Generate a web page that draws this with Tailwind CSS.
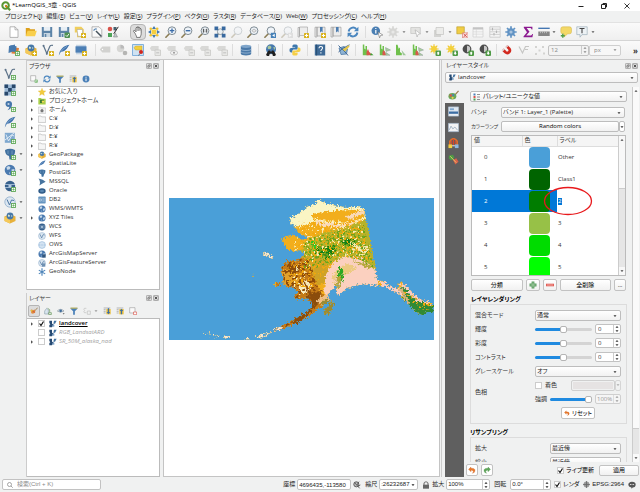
<!DOCTYPE html>
<html lang="ja">
<head>
    <meta charset="UTF-8">
    <meta name="viewport" content="width=device-width, initial-scale=1.0">
    <title>*LearnQGIS_3章 - QGIS</title>
    <script src="https://cdn.jsdelivr.net/npm/@tailwindcss/browser@4"></script>
</head>
<body class="h-screen flex flex-col overflow-hidden bg-[#f0f1f1] text-[#333] text-[6px] leading-[9px] whitespace-nowrap font-['Open_Sans','Noto_Sans_CJK_JP',sans-serif] [font-feature-settings:'palt']">

    <!-- Icon sheet, every icon is drawn on a 12x12 grid -->
    <svg class="hidden" xmlns="http://www.w3.org/2000/svg">
        <symbol id="plus-yellow" viewBox="0 0 12 12"><rect x="7" y="7" width="5" height="5" rx=".6" fill="#d9b21c"/><path d="M9.500 7.800v3.400M7.800 9.500h3.400" stroke="#fff" stroke-width="1"/></symbol>
        <symbol id="plus-green" viewBox="0 0 12 12"><rect x="7.500" y="7.500" width="4" height="4" fill="#f4fbf3" stroke="#5ea757" stroke-width=".9"/><path d="M9.500 8.300v2.400M8.300 9.500h2.400" stroke="#5ea757" stroke-width=".7"/></symbol>
        <symbol id="new" viewBox="0 0 12 12"><path d="M2 .8h5l3 3v7.600H2z" fill="#fff" stroke="#9a9a9a" stroke-width=".7"/><path d="M7 .8v3h3" fill="none" stroke="#9a9a9a" stroke-width=".7"/></symbol>
        <symbol id="open" viewBox="0 0 12 12"><path d="M.8 2h3.500l1 1.300H10V10H.8z" fill="#dda01c"/><path d="M2.500 4.800h9.300L10 10.300H.8z" fill="#f9cf4c"/></symbol>
        <symbol id="save" viewBox="0 0 12 12"><path d="M.8 1h10.400v10H.8z" fill="#5c84a8"/><path d="M2.800 1h6.400v3.800H2.800z" fill="#e8eff5"/><path d="M2.800 7h6.400v4H2.800z" fill="#c7d6e2"/><path d="M3.800 8h1.500v3H3.800z" fill="#5c84a8"/></symbol>
        <symbol id="saveas" viewBox="0 0 12 12"><use href="#save"/><rect x="6.500" y="6.500" width="5.500" height="5.500" rx="1" fill="#4f9152"/><path d="m7.800 9.300 1.200 1.200 2-2.600" fill="none" stroke="#fff" stroke-width=".9"/></symbol>
        <symbol id="newlayout" viewBox="0 0 12 12"><path d="M.8.800h6.500l2.500 2.500v8H3V6.500H.8z" fill="#f0ce5c"/><path d="M3 3.500h5.500v6.800H4z" fill="#fff" stroke="#9a9a9a" stroke-width=".5"/><use href="#plus-yellow"/></symbol>
        <symbol id="layoutmgr" viewBox="0 0 12 12"><path d="M1 .8h7l2.800 2.800v7.600H1z" fill="#fafafa" stroke="#9a9a9a" stroke-width=".7"/><path d="m5 5 5.500 5.500" stroke="#46535d" stroke-width="1.500"/><path d="M2.800 4.800a2 2 0 0 1 3-1.600" fill="none" stroke="#5d8ab5" stroke-width="1.200"/></symbol>
        <symbol id="style" viewBox="0 0 12 12"><circle cx="3" cy="3" r="2.300" fill="#d9534a"/><path d="M6.500 1h3v3.400h-3z" fill="#45616f"/><path d="M1 7h4v4H1z" fill="#4ba357"/><path d="m11.300.8-4.600 7" stroke="#2e2e2e" stroke-width="1"/><path d="m6.500 11 1.700-4.500L10.500 11z" fill="#bfc5ca" stroke="#777" stroke-width=".5"/></symbol>
        <symbol id="hand" viewBox="0 0 12 12"><path d="M3.200 7.500 1.600 5.400c-.4-1 .7-1.400 1.300-.7L4 5.800V2.200c0-1 1.300-1 1.300 0V1.400c0-1 1.300-1 1.300 0v.8c0-.9 1.300-.9 1.300 0v1c0-.8 1.300-.8 1.300 0V7.400c0 2-.8 2.500-1 4H4.600c0-1.800-.9-2.300-1.400-3.900z" fill="#fff" stroke="#444" stroke-width=".7"/><path d="M5.300 2.500V5M6.600 2.500V5M7.900 3v2" stroke="#444" stroke-width=".5"/></symbol>
        <symbol id="pan" viewBox="0 0 12 12"><path d="M3.500 3.500h5v5h-5z" fill="#f4ce3e"/><path d="m6 0 2 3H4zM6 12 4 9h4zM0 6l3-2v4zM12 6 9 8V4z" fill="#4479b0"/><circle cx="2.800" cy="2.800" r="1.300" fill="#edc32f"/><circle cx="9.200" cy="2.800" r="1.300" fill="#edc32f"/><circle cx="2.800" cy="9.200" r="1.300" fill="#edc32f"/><circle cx="9.200" cy="9.200" r="1.300" fill="#edc32f"/></symbol>
        <symbol id="lens" viewBox="0 0 12 12"><path d="M4.300 7.800.9 11.200" stroke="#8b7d55" stroke-width="1.600" stroke-linecap="round"/><circle cx="7" cy="4.700" r="3.900" fill="#eef3f8" stroke="#65737d" stroke-width=".8"/></symbol>
        <symbol id="zoomin" viewBox="0 0 12 12"><use href="#lens"/><path d="M7 2.400v4.600M4.700 4.700h4.600" stroke="#3b6ca8" stroke-width="1.300"/></symbol>
        <symbol id="zoomout" viewBox="0 0 12 12"><use href="#lens"/><path d="M4.700 4.700h4.600" stroke="#3b6ca8" stroke-width="1.400"/></symbol>
        <symbol id="zoomone" viewBox="0 0 12 12"><use href="#lens"/><path d="M5.400 2.800v3.800M8.700 2.800v3.800" stroke="#333" stroke-width=".9"/><path d="M7 3.600v.8M7 5.400v.8" stroke="#333" stroke-width=".8"/></symbol>
        <symbol id="zoomfull" viewBox="0 0 12 12"><path d="M4.500 7.500 2 10.500" stroke="#8b7d55" stroke-width="1.300"/><circle cx="6.300" cy="5.700" r="2.900" fill="#e9eff3" stroke="#717c84" stroke-width=".7"/><path d="M.5.500h3.700v3.700H.5zM7.800.500h3.700v3.700H7.800zM.5 7.800h3.700v3.700H.5zM7.800 7.800h3.700v3.700H7.800z" fill="#38699f"/></symbol>
        <symbol id="zoomsel" viewBox="0 0 12 12"><g opacity=".35"><use href="#lens"/></g></symbol>
        <symbol id="zoomlayer" viewBox="0 0 12 12"><use href="#lens"/><path d="m4.800 4.700 2.200-1.700 2.300 1.700L7 6.400z" fill="#e8e8e8" stroke="#888" stroke-width=".5"/></symbol>
        <symbol id="zoomlast" viewBox="0 0 12 12"><use href="#lens"/><path d="M6.800 6.800H12V12H6.800z" fill="#4681b8"/><path d="m10.700 7.700-2.500 1.700 2.500 1.700z" fill="#fff"/></symbol>
        <symbol id="zoomnext" viewBox="0 0 12 12"><g opacity=".35"><use href="#lens"/><path d="M6.800 6.800H12V12H6.800z" fill="#bbb"/><path d="m8.200 7.700 2.500 1.700-2.500 1.700z" fill="#fff"/></g></symbol>
        <symbol id="mapnew" viewBox="0 0 12 12"><path d="M1 1.500h1.500V11H1zM2.500 1h8v8.500h-8z" fill="#ececec" stroke="#9c9c9c" stroke-width=".6"/><use href="#plus-yellow"/></symbol>
        <symbol id="bookmark" viewBox="0 0 12 12"><path d="M1 1.200h2V11H1zM3 1.200h8V10H3z" fill="#ececec" stroke="#949494" stroke-width=".6"/><path d="M6 1h2.600v5.500L7.300 5.300 6 6.500z" fill="#4d7db0"/></symbol>
        <symbol id="bookmarknew" viewBox="0 0 12 12"><use href="#bookmark"/><use href="#plus-yellow"/></symbol>
        <symbol id="refresh" viewBox="0 0 12 12"><path d="M1.600 5.500A4.500 4.500 0 0 1 9.300 3M10.400 6.500A4.500 4.500 0 0 1 2.700 9" fill="none" stroke="#4a86bf" stroke-width="1.900"/><path d="M11.400.7v4.500H6.900zM.6 11.300V6.800h4.500z" fill="#4a86bf"/></symbol>
        <symbol id="identify" viewBox="0 0 12 12"><circle cx="4.800" cy="4.800" r="4.300" fill="#4b7fb3"/><path d="M4.800 4v3.600M4.800 1.900v1.200" stroke="#fff" stroke-width="1.200"/><path d="m6.800 5.800 5 3.200-2.300.5-.9 2.300z" fill="#fff" stroke="#555" stroke-width=".5"/></symbol>
        <symbol id="gear" viewBox="0 0 12 12"><path d="M6 .3v11.400M.3 6h11.400M2 2l8 8M10 2l-8 8" stroke="currentColor" stroke-width="1.700"/><circle cx="6" cy="6" r="3.800" fill="currentColor"/><circle cx="6" cy="6" r="1.600" fill="#fff" fill-opacity=".45"/></symbol>
        <symbol id="select" viewBox="0 0 12 12"><path d="M.8 1.500h9.500v6H.8z" fill="#e3e3e1" stroke="#c3c3c1" stroke-width=".7"/><path d="m5 3.800 5.500 4-2.500.6-.9 2.600z" fill="#fff" stroke="#aaa" stroke-width=".6"/></symbol>
        <symbol id="layersgray" viewBox="0 0 12 12"><path d="M1 4h7v7H1z" fill="#d4d4d2"/><path d="M3 1.500h7.500v7H3z" fill="#ececea" stroke="#bcbcba" stroke-width=".6"/></symbol>
        <symbol id="deselect" viewBox="0 0 12 12"><path d="M.8.800h7.500v7H.8z" fill="#f0cd45" stroke="#b99a22" stroke-width=".6"/><path d="M6.500 6.800H12V12H6.500z" fill="#fbe5e3" stroke="#d9706a" stroke-width=".6"/><path d="m7.500 7.800 3.400 3.200m0-3.200-3.400 3.200" stroke="#cc3f3a" stroke-width=".9"/></symbol>
        <symbol id="table" viewBox="0 0 12 12"><path d="M1 1.500h10v9.500H1z" fill="#f6f6f6" stroke="#cfcfcf" stroke-width=".7"/><path d="M1 2.500h10" stroke="#c4c4c4" stroke-width="2"/><path d="M1 5.800h10M1 8.200h10M4.300 3v8" stroke="#d4d4d4" stroke-width=".6"/></symbol>
        <symbol id="calc" viewBox="0 0 12 12"><path d="M.8.800h10.400v10.400H.8z" fill="#f4f4f4" stroke="#c2c2c2" stroke-width=".7"/><path d="M1 3.200h10M1 5.800h10M1 8.400h10" stroke="#d0d0d0"/><path d="M3.500 1.800v2.600M7.500 4.500v2.600M5 7v2.600" stroke="#b5b5b5" stroke-width="1.100"/></symbol>
        <symbol id="sigma" viewBox="0 0 12 12"><path d="M1.800.8h8.600v2.700h-.8C9.300 2.400 8.800 2 7.700 2H4.600L7.500 5.700 4.200 9.600h3.900c1.200 0 1.700-.5 2.100-1.700h.8l-.6 3.300H1.500v-.7L5 6.300 1.800 1.800z" fill="#8c1a90"/></symbol>
        <symbol id="measure" viewBox="0 0 12 12"><path d="M.3 2.300h11.400" stroke="#3a6fae" stroke-width="1.300"/><path d="M.3 5.500h11.400v4.500H.3z" fill="#858585"/><path d="M2.500 5.500v1.700M4.500 5.500v1.700M6.500 5.500v1.700M8.500 5.500v1.700" stroke="#d8d8d8" stroke-width=".6"/></symbol>
        <symbol id="tip" viewBox="0 0 12 12"><path d="M2.800.8h6.700q2 0 2 2v3q0 2-2 2H7.800L4 11V7.800H2.800q-2 0-2-2v-3q0-2 2-2z" fill="#f3d867" stroke="#d2b244" stroke-width=".5"/><path d="M2.800 7.800v4M.8 9.800h4" stroke="#4f9c47" stroke-width="1.400"/></symbol>
        <symbol id="annot" viewBox="0 0 12 12"><path d="M.8.800h10.400v7.800H6l-2 2.600V8.600H.8z" fill="#edf2f5" stroke="#9db0bb" stroke-width=".7"/><path d="M3.500 2.500h5M6 2.500v4.700" stroke="#444" stroke-width="1.100"/></symbol>

        <symbol id="dsm" viewBox="0 0 12 12"><path d="m1 2 6-1.500V7L.5 9z" fill="#4c7cae"/><path d="m4 3.200 7 .8-1 6-6.500-.5z" fill="#e0803a"/><path d="m2.500 1.300 6 1L8 8 2 7.500z" fill="#4678ad"/><use href="#plus-green"/></symbol>
        <symbol id="gpkg" viewBox="0 0 12 12"><path d="m6 2 5.500 2.500V9L6 11.500.500 9V4.500z" fill="#e7b13b"/><path d="M6 6.700v4.800L.5 9V4.500z" fill="#f4c95a"/><circle cx="6" cy="4" r="3.400" fill="#4778a8"/><path d="m4 2.500 2 .8-.6 1.700L4 4.500zM7 3l1.500 1-1 1z" fill="#dbe8d2"/></symbol>
        <symbol id="gpkgnew" viewBox="0 0 12 12"><use href="#gpkg"/><use href="#plus-yellow"/></symbol>
        <symbol id="vee" viewBox="0 0 12 12"><path d="M1.500 1.800 4.800 9.500 8 2Q8.700.9 11 1.400" fill="none" stroke="#5d7389" stroke-width="1.200"/><circle cx="1.500" cy="1.800" r="1" fill="#5d7389"/><circle cx="4.800" cy="9.700" r="1" fill="#5d7389"/></symbol>
        <symbol id="veenew" viewBox="0 0 12 12"><use href="#vee"/><use href="#plus-yellow"/></symbol>
        <symbol id="veeadd" viewBox="0 0 12 12"><use href="#vee"/><use href="#plus-green"/></symbol>
        <symbol id="feather" viewBox="0 0 12 12"><path d="M.8 11.400C1.500 6 5 1.500 11.500.700 9.500 3 10 4 7.500 6c-1.800 1.500-4 1.500-5 2.400z" fill="#3f72ac"/><path d="M1.500 9.500Q4.500 4.500 9 2.300" stroke="#b9cfe4" stroke-width=".5" fill="none"/></symbol>
        <symbol id="feathernew" viewBox="0 0 12 12"><use href="#feather"/><use href="#plus-yellow"/></symbol>
        <symbol id="featheradd" viewBox="0 0 12 12"><use href="#feather"/><use href="#plus-green"/></symbol>
        <symbol id="chipnew" viewBox="0 0 12 12"><path d="M2 .8v9.500M4 .8v9.500M6 .8v9.500M8 .8v9.500M10 .8v9.500" stroke="#7ba2c9" stroke-width=".8"/><path d="M.5 2.300h11v6.300H.5z" fill="#4c7fb5"/><use href="#plus-yellow"/></symbol>
        <symbol id="labelgray" viewBox="0 0 12 12"><path d="m.8 5.500 2.500-3h8v6h-8z" fill="#d2d2d0"/><circle cx="3.500" cy="5.500" r=".7" fill="#fff"/></symbol>
        <symbol id="labelgray2" viewBox="0 0 12 12"><path d="M.8 4.300 2.600 2h7v5H2.600z" fill="#d8d8d6"/><path d="M6 6h5.500v5.500H6z" fill="#e8e8e6" stroke="#c4c4c2" stroke-width=".7"/><path d="M7.200 8.800h3" stroke="#b5b5b5" stroke-width=".8"/></symbol>
        <symbol id="labeleye" viewBox="0 0 12 12"><path d="M.8 4.300 2.600 2h7v5H2.600z" fill="#d8d8d6"/><ellipse cx="8" cy="8.800" rx="3.600" ry="2.200" fill="#f2f2f2" stroke="#b5b5b5" stroke-width=".7"/><circle cx="8" cy="8.800" r="1" fill="#999"/></symbol>
        <symbol id="pie" viewBox="0 0 12 12"><circle cx="4.500" cy="4.500" r="3.700" fill="#d6d6d4"/><path d="M4.500 4.500V.800A3.700 3.700 0 0 1 8.200 4.500z" fill="#bababa"/><circle cx="9" cy="9" r="2.300" fill="#b5b5b3"/></symbol>
        <symbol id="pin" viewBox="0 0 12 12"><path d="M.5.500h11v11H.5z" fill="#cfe2f2" stroke="#6aa2d6" stroke-width=".8"/><path d="M2 3.800 3.500 2H10v4H3.500z" fill="#f3cf3c" stroke="#b69a28" stroke-width=".4"/><circle cx="9" cy="8" r="2" fill="#d3261d"/><path d="m8 9.500-1.500 2" stroke="#555" stroke-width=".8"/></symbol>
        <symbol id="db" viewBox="0 0 12 12"><path d="M.8 2.300v7.500c0 2.300 10.400 2.300 10.400 0V2.300z" fill="#4a79a8"/><path d="M.8 5c0 2 10.400 2 10.400 0M.8 7.600c0 2 10.400 2 10.400 0" fill="none" stroke="#a8c3dc" stroke-width=".7"/><ellipse cx="6" cy="2.300" rx="5.200" ry="1.600" fill="#7fa5ca"/></symbol>
        <symbol id="globe" viewBox="0 0 12 12"><circle cx="6" cy="6" r="5.300" fill="#4a7ab0"/><path d="m2.500 3 2.500-1 1.500 1.500-1 2L3 5.800zM7.500 5.500l3-.5-.5 3-2 1.500zM5 8l1.200 1-.6 1.500z" fill="#c9dae9"/></symbol>
        <symbol id="globefind" viewBox="0 0 12 12"><circle cx="6" cy="5.200" r="5" fill="#4678ad"/><path d="m2.500 2.500 2.500-1 1.500 1.500-1 2L3 5zM8 3.500l2-.5v3z" fill="#a9c79b"/><path d="M3.500 6.500h1.700v1h1.600v-1h1.700l2 3.200a1.600 1.600 0 1 1-3 .8L7 9.500H5l-.5 1a1.600 1.600 0 1 1-3-.8z" fill="#1f1f1f"/></symbol>
        <symbol id="python" viewBox="0 0 12 12"><path d="M6 .5c-2 0-2.600.6-2.600 1.600v1.300H6.200v.6H2.300C1 4 .5 4.800.5 6.200S1 8.400 2.300 8.400h1V7.200c0-1.100.8-1.600 1.700-1.600h2.400c.8 0 1.300-.6 1.300-1.400V2.100C8.700 1.100 8 .500 6 .5z" fill="#3e78ad"/><path d="M6 11.500c2 0 2.600-.6 2.600-1.600V8.600H5.800V8h3.900c1.300 0 1.800-.8 1.800-2.200s-.5-2.200-1.800-2.200h-1v1.200c0 1.100-.8 1.600-1.700 1.600H4.600c-.8 0-1.300.6-1.300 1.400v2.100c0 1 .7 1.600 2.700 1.600z" fill="#f5cf47"/></symbol>
        <symbol id="help" viewBox="0 0 12 12"><path d="M.8.500h10.400v11H.8z" fill="#3e6a96"/><path d="M2.600.500v11" stroke="#25476a" stroke-width=".8"/><path d="M5 4.200q0-1.700 1.800-1.700t1.700 1.600c0 1.300-1.600 1.300-1.600 2.900M6.900 8.300v1.200" fill="none" stroke="#fff" stroke-width="1.100"/></symbol>
        <symbol id="topo" viewBox="0 0 12 12"><path d="M1 4 6 2.500 9.500 5 8.500 10 3 10.500z" fill="#8eb3d4" stroke="#3f6f9f" stroke-width=".7"/><path d="m.5 1.500 3 3 5 5 1.500 2M.5 8l4-3.500L11.500.800" stroke="#355f8c" stroke-width=".9" fill="none"/><path d="m4.500 5.500 6.500-4.500.5 1.500L7 7.500z" fill="#e5c548"/></symbol>
        <symbol id="hist" viewBox="0 0 12 12"><path d="M.8 11.300V.5h1.500v4l1.200 1V2h1.500v5l1.500 1.500V11.300z" fill="#6fc04c"/><path d="M4.500 11.300V8l1.500-3 1.200 3 1.300 1 1 2.300z" fill="#d8584c"/><path d="m9 9 2.500 2.300H8z" fill="#3da033"/></symbol>
        <symbol id="histfull" viewBox="0 0 12 12"><path d="M.8 11.300V.5h1.500v4l1.200 1V2h1.500v5l1.500 1.500V11.300z" fill="#6fc04c"/><path d="M3.500 11.300V8l1.300-2L6 8l1 3.300z" fill="#d8584c"/><path d="m6.500 3.500 5 2.500-4.500 1.500zM7 11.300V8.500l4 2.800z" stroke="#8c9a94" stroke-width=".5" fill="#a7cf9b"/></symbol>
        <symbol id="histgreen" viewBox="0 0 12 12"><path d="M1 11.300V.800h1.600l1 4L5 3.500V8l1.800 1.200v2.100z" fill="#6fc04c"/><path d="m6.500 6 4.500 5.300H8z" fill="#9fc79a"/></symbol>
        <symbol id="sun" viewBox="0 0 12 12"><path d="M5 .3v9.200M.3 5h9.300M1.700 1.700l6.600 6.600M8.300 1.700 1.700 8.300" stroke="#efc62b" stroke-width="1.100"/><circle cx="5" cy="5" r="2.900" fill="#f4d13a"/></symbol>
        <symbol id="sunup" viewBox="0 0 12 12"><use href="#sun"/><rect x="6.500" y="6.500" width="5.500" height="5.500" rx="1" fill="#4f9a45"/><path d="m9.200 7.500 1.600 1.800H10v1.500H8.400V9.300h-.8z" fill="#fff"/></symbol>
        <symbol id="sundown" viewBox="0 0 12 12"><use href="#sun"/><rect x="6.500" y="6.500" width="5.500" height="5.500" rx="1" fill="#4f9a45"/><path d="M9.200 11 7.600 9.200h.8V7.600H10v1.600h.8z" fill="#fff"/></symbol>
        <symbol id="conup" viewBox="0 0 12 12"><circle cx="5" cy="5" r="4.400" fill="#4d4d4d"/><path d="M5 1.800a3.200 3.200 0 0 1 0 6.400z" fill="#c8c8c8"/><rect x="6.500" y="6.500" width="5.500" height="5.500" rx="1" fill="#4f9a45"/><path d="m9.200 7.500 1.600 1.800H10v1.500H8.400V9.300h-.8z" fill="#fff"/></symbol>
        <symbol id="condown" viewBox="0 0 12 12"><circle cx="5" cy="5" r="4.400" fill="#4d4d4d"/><path d="M5 1.800a3.200 3.200 0 0 1 0 6.400z" fill="#c8c8c8"/><rect x="6.500" y="6.500" width="5.500" height="5.500" rx="1" fill="#4f9a45"/><path d="M9.200 11 7.600 9.200h.8V7.600H10v1.600h.8z" fill="#fff"/></symbol>
        <symbol id="magnet" viewBox="0 0 12 12"><path d="M1.800 5.500 4.500 8.300Q6.300 9.800 8 8.200T8.200 4.600L5.500 2" fill="none" stroke="#d22a20" stroke-width="2.700"/><path d="m.7 6.600 2.200-2.100.9.900-2.200 2.200zM4.500 3.100 6.700.9l.9.900-2.200 2.200z" fill="#dedede"/></symbol>
        <symbol id="snapgray" viewBox="0 0 12 12"><path d="M1 2.500 4.500 9 7.500 2.500H11M7 5.500h3" fill="none" stroke="#c6c6c4" stroke-width="1.200"/></symbol>
        <symbol id="dotsgray" viewBox="0 0 12 12"><path d="M1 2h2v2H1zM8 2h2v2H8zM4.500 5.500h2v2h-2zM1 9h2v2H1zM9 8.500h2v2H9z" fill="#d3d3d1"/></symbol>

        <symbol id="raster" viewBox="0 0 12 12"><path d="M.5.500h11v11H.5z" fill="#9bb9d6"/><path d="M.5.500h3.600v3.600H.5zM7.800.500h3.700v3.600H7.800zM4.100 4.100h3.700v3.700H4.100zM.5 7.800h3.600v3.700H.5z" fill="#29486b"/></symbol>
        <symbol id="rasteradd" viewBox="0 0 12 12"><use href="#raster"/><use href="#plus-green"/></symbol>
        <symbol id="rasterlay" viewBox="0 0 12 12"><path d="M.5 1h4v4.500l2.500 1L4.500 11h-4V7.500l1.500-1-1.500-2z" fill="#264a72"/><path d="M7.500 1h4L9 5.500H6.500z" fill="#41719f"/><path d="M5 7h3v3H5z" fill="#7fa2c6"/></symbol>
        <symbol id="comma" viewBox="0 0 12 12"><path d="M4.500 1A3 3 0 0 1 8 4.500C8 7.500 6 9.500 3.500 10.200 4.800 9 5.300 8 5.300 6.800 3 7.300 1.500 5.800 1.500 4a3 3 0 0 1 3-3z" fill="#4576ab"/><circle cx="4.500" cy="4" r="1.100" fill="#c5d6e7"/><use href="#plus-green"/></symbol>
        <symbol id="mesh" viewBox="0 0 12 12"><path d="M.8.800h10v10H.8z" fill="#7fa8cf"/><path d="M2 2.500 4.500 9 8 3l2 1M1 8l9-7" stroke="#e6eff7" stroke-width=".9" fill="none"/><use href="#plus-green"/></symbol>
        <symbol id="elephant" viewBox="0 0 12 12"><path d="M1 2q5-2.500 10 0 .6 4-2 6.300L8 11.500H5.500L5 8Q1 7 1 2z" fill="#41719f"/><path d="M4 2.500v3.500M8 2.500v4" stroke="#84a9cc" stroke-width=".7"/></symbol>
        <symbol id="pgadd" viewBox="0 0 12 12"><use href="#elephant"/><use href="#plus-green"/></symbol>
        <symbol id="globeadd" viewBox="0 0 12 12"><use href="#globe"/><use href="#plus-green"/></symbol>
        <symbol id="wcs" viewBox="0 0 12 12"><circle cx="6" cy="6" r="5.200" fill="#38618d"/><path d="M1 4.500h10M1 7.500h10" stroke="#b7cde2" stroke-width=".8"/><path d="M4.500 5h3v2.200h-3z" fill="#b7cde2"/></symbol>
        <symbol id="wcsadd" viewBox="0 0 12 12"><use href="#wcs"/><use href="#plus-green"/></symbol>
        <symbol id="wfs" viewBox="0 0 12 12"><circle cx="6" cy="6" r="5.200" fill="#dce7f1" stroke="#85a6c6" stroke-width=".7"/><path d="M3 3.500 5.500 9 7.500 4l2.500.5" fill="none" stroke="#4d77a2" stroke-width="1"/></symbol>
        <symbol id="wfsadd" viewBox="0 0 12 12"><use href="#wfs"/><use href="#plus-green"/></symbol>
        <symbol id="ows" viewBox="0 0 12 12"><circle cx="6" cy="6" r="5.200" fill="#eaf2f9" stroke="#8db3d8" stroke-width=".8"/><path d="M1 6h10M6 1v10M3.500 1.800q-2 4 0 8.500M8.500 1.800q2 4 0 8.500" fill="none" stroke="#8db3d8" stroke-width=".7"/></symbol>
        <symbol id="arcmap" viewBox="0 0 12 12"><use href="#globe"/><path d="M6.500 6.500h5v5h-5z" fill="#33577e"/></symbol>
        <symbol id="arcfeat" viewBox="0 0 12 12"><use href="#wfs"/><path d="M6 6.500h5v5H6z" fill="#6f91b3"/></symbol>
        <symbol id="star" viewBox="0 0 12 12"><path d="m6 .3 1.600 3.900 4.200.3-3.200 2.700 1 4.100L6 9.100l-3.600 2.200 1-4.100L.2 4.500l4.200-.3z" fill="#f2cb3c" stroke="#dcb02b" stroke-width=".4"/></symbol>
        <symbol id="projhome" viewBox="0 0 12 12"><path d="M.5 1.500h4l1 1.300h6v8.400H.5z" fill="#a8cf4b"/><path d="M3 4h6v5H3z" fill="#3e7f33"/><circle cx="7.500" cy="7" r="1.800" fill="#f4de58"/></symbol>
        <symbol id="home" viewBox="0 0 12 12"><path d="M.5 1.500h4l1 1.300h6v8.400H.5z" fill="#f2f2f2" stroke="#a9a9a9" stroke-width=".6"/><path d="M6 4 3 6.800h1v2.700h4V6.800h1z" fill="#777"/></symbol>
        <symbol id="folder" viewBox="0 0 12 12"><path d="M.5 1.500h4l1 1.300h6v8.400H.5z" fill="#f5f5f5" stroke="#a9a9a9" stroke-width=".8"/></symbol>
        <symbol id="mssql" viewBox="0 0 12 12"><path d="M.8.800Q8 2 11.500 5.500 8 7.500 2 11.200 4.500 6 .800.800z" fill="#47749f"/></symbol>
        <symbol id="oracle" viewBox="0 0 12 12"><ellipse cx="6" cy="6" rx="5.500" ry="4.200" fill="#2f5a87"/><ellipse cx="6" cy="6" rx="3" ry="1.800" fill="#5886b2"/></symbol>
        <symbol id="db2" viewBox="0 0 12 12"><rect x=".5" y=".8" width="11" height="10.400" rx="1" fill="#6695c0"/><path d="M2 4.500h3v3H2zM6.500 4.500H10M6.500 7.500H10" fill="none" stroke="#e1ecf5" stroke-width=".8"/></symbol>
        <symbol id="geonode" viewBox="0 0 12 12"><path d="M6 .5v11M1.200 3.200l9.600 5.600M10.800 3.200 1.200 8.800" stroke="#4b83b8" stroke-width="1.700"/></symbol>

        <symbol id="addlayer" viewBox="0 0 12 12"><path d="M1 1h7.500v8H1z" fill="#fafafa" stroke="#9c9c9c" stroke-width=".9"/><use href="#plus-green"/></symbol>
        <symbol id="filter" viewBox="0 0 12 12"><path d="M.8 1h10.400v1.800L7.300 6.500v5H4.700v-5L.8 2.800z" fill="#4a80b8"/><path d="M.8 1h10.400v1.300H.8z" fill="#e8c63d"/></symbol>
        <symbol id="collapse" viewBox="0 0 12 12"><path d="M1 1.500h10M1 4h3M1 6.500h3M1 9h3" stroke="#8d8d8d" stroke-width=".9"/><path d="M5 3h6.500v8H5z" fill="#efc23a"/><path d="M8.200 2.500 11 6H9.200v5H7.200V6H5.400z" fill="#3d6fa5"/></symbol>
        <symbol id="expand" viewBox="0 0 12 12"><path d="M1 1.500h10M1 4h3M1 6.500h3M1 9h3" stroke="#8d8d8d" stroke-width=".9"/><path d="M5 3h6.500v8H5z" fill="#efc23a"/><path d="M8.200 11 11 7.500H9.200V2H7.200v5.500H5.400z" fill="#3d6fa5"/></symbol>
        <symbol id="info" viewBox="0 0 12 12"><circle cx="6" cy="6" r="5.200" fill="#4a80b8"/><path d="M6 5.200v4M6 2.700v1.400" stroke="#fff" stroke-width="1.500"/></symbol>
        <symbol id="brush" viewBox="0 0 12 12"><path d="m11.500 1-5.500 6" stroke="#9c7b4c" stroke-width="1.300"/><path d="M.8 4.500Q3 2.500 4.500 5l2.800-1.200L8 8Q5 11.500 2 9.500z" fill="#e18b3f"/><path d="M1 4.500q2-.8 3 1l-2 2z" fill="#e3c33b"/><path d="M4 6.500 7.500 8" stroke="#cf4a31" stroke-width="1.200"/></symbol>
        <symbol id="palette" viewBox="0 0 12 12"><path d="m11.500 1-5.300 6" stroke="#9c7b4c" stroke-width="1.300"/><ellipse cx="4.800" cy="6.800" rx="4.300" ry="3.600" fill="#6ba858"/><circle cx="3" cy="6" r="1.300" fill="#d9534a"/><circle cx="5.800" cy="5.500" r="1.200" fill="#4a80b8"/><circle cx="5" cy="8.500" r="1.200" fill="#ead04a"/></symbol>
        <symbol id="group" viewBox="0 0 12 12"><path d="M1 10.500V6l3-4 2.500 2V10.500z" fill="#d9e6ef" stroke="#7b8f9f" stroke-width=".8"/><path d="m5.500 2 3 2v4M7 8.500h4v2.800H7z" fill="none" stroke="#5d9352" stroke-width="1"/></symbol>
        <symbol id="eye" viewBox="0 0 12 12"><path d="M.5 6Q5 1 10.500 6 5 10 .500 6z" fill="#e3ebf1" stroke="#6f7f8c" stroke-width=".8"/><circle cx="5.500" cy="5.800" r="2" fill="#3f6c9b"/><path d="M8.500 9.500h3l-1.500 1.800z" fill="#555"/></symbol>
        <symbol id="epsilon" viewBox="0 0 12 12"><path d="M5 2H2q-1.500 2 .5 3Q.5 6 2 8.500h3M6.500 6H11v5H6.500z" fill="none" stroke="#c0c0be" stroke-width="1"/></symbol>
        <symbol id="remove" viewBox="0 0 12 12"><path d="M1 1h8v8H1z" fill="#fafafa" stroke="#9c9c9c" stroke-width=".9"/><path d="M6.800 7.500h4.700v4H6.800z" fill="#fff" stroke="#d9534a" stroke-width="1"/></symbol>
        <symbol id="transp" viewBox="0 0 12 12"><path d="M.5 1h11v10H.5z" fill="#dfe8f0" stroke="#a9bed2" stroke-width=".7"/><path d="M1 6h10v2.500H1z" fill="#3c6ea3"/><path d="M2 2.500h4.500v2H2z" fill="#7fa8cf"/><path d="M1 9.700h10" stroke="#f4f4f4"/></symbol>
        <symbol id="histo" viewBox="0 0 12 12"><path d="M.5 1.500h11v9H.5z" fill="#f2f3f4" stroke="#a9bed2" stroke-width=".7"/><path d="m1.500 8.500 1.800-4 2 3 2.200-2L10.500 9" fill="none" stroke="#8aa0b4" stroke-width=".8"/></symbol>
        <symbol id="render" viewBox="0 0 12 12"><path d="M2 8V3.500Q6-2 10 3.500V8" fill="none" stroke="#df6d2d" stroke-width="1.800"/><path d="M6 1v7M4 3v4M8 3v4" stroke="#d4472b" stroke-width="1.200"/><path d="M.5 7h4v4h-4z" fill="#f3cf43"/><path d="M7.500 7h4v4h-4z" fill="#8db8e0"/><path d="M4.500 8.500h3" stroke="#f4f4f4"/></symbol>
        <symbol id="pyramid" viewBox="0 0 12 12"><path d="M1 1.500 5.500.800 7 4 3.500 7 .800 5z" fill="#4f9a45"/><path d="m5.500 6.500 3.500-2 2.500 4L8 11.500z" fill="#d9614a"/><path d="M2.500 2.500 9 9.500" stroke="#f2dc6a" stroke-width=".9"/></symbol>
        <symbol id="undo" viewBox="0 0 12 12"><path d="M4.500 1.500v2Q11 3 10.500 7.500 10 10.500 6.500 11 9 8.500 7.500 7 6.500 6.300 4.500 6.500v2.200L.8 5z" fill="#e8792c" stroke="#c95a1c" stroke-width=".4"/></symbol>
        <symbol id="redo" viewBox="0 0 12 12"><path d="M7.500 1.500v2Q1 3 1.500 7.500 2 10.500 5.500 11 3 8.500 4.500 7 5.500 6.300 7.500 6.500v2.200L11.200 5z" fill="#5fa65a" stroke="#3f8440" stroke-width=".4"/></symbol>
        <symbol id="caret" viewBox="0 0 12 12"><path d="M1.500 3.500h9L6 9z" fill="currentColor"/></symbol>
        <symbol id="caretup" viewBox="0 0 12 12"><path d="M1.500 8.500h9L6 3z" fill="currentColor"/></symbol>
        <symbol id="caretright" viewBox="0 0 12 12"><path d="M3 1v10l6-5z" fill="currentColor"/></symbol>
        <symbol id="float" viewBox="0 0 12 12"><rect x=".8" y=".8" width="10.400" height="10.400" rx="2" fill="#e2e2e2" stroke="#858585" stroke-width="1.300"/><path d="M3.500 5.500h3v3h-3zM5.500 5.500v-2h3v3h-2" fill="none" stroke="#555"/></symbol>
        <symbol id="close" viewBox="0 0 12 12"><rect x=".8" y=".8" width="10.400" height="10.400" rx="2" fill="#d6d6d6" stroke="#858585" stroke-width="1.300"/><path d="m3.500 3.500 5 5m0-5-5 5" stroke="#333" stroke-width="1.600"/></symbol>
    </svg>

    <!-- Title bar -->
    <header class="h-[11px] shrink-0 bg-white flex items-center pl-px text-black">
        <svg class="size-2.5 mt-px" viewBox="0 0 12 12"><circle cx="5.500" cy="5.500" r="3.900" fill="#fff" stroke="#589632" stroke-width="2.400"/><path d="m5.500 5.500 5.500 5.500" stroke="#589632" stroke-width="2.600"/><path d="m5 5 2.500 2.500" stroke="#ee7913" stroke-width="1.600"/></svg>
        <h1 class="pl-px">*LearnQGIS_3章 - QGIS</h1>
        <div class="ml-auto flex items-center gap-[15px] pr-[9px]">
            <button aria-label="最小化"><svg class="block size-2" viewBox="0 0 8 8"><path d="M1.500 4.500h5" stroke="#222"/></svg></button>
            <button aria-label="元に戻す"><svg class="block size-2" viewBox="0 0 8 8"><path d="M1.500 2.500h4v4h-4zM3 2.500v-1h3.500V5H5.500" fill="none" stroke="#222"/></svg></button>
            <button aria-label="閉じる"><svg class="block size-2" viewBox="0 0 8 8"><path d="m1.500 1.500 5 5m0-5-5 5" stroke="#222" stroke-width=".9"/></svg></button>
        </div>
    </header>

    <!-- Menu bar -->
    <nav class="h-[11px] shrink-0 flex items-center gap-1 pl-[5px] text-[#222]">
        <a href="#">プロジェクト(<u>J</u>)</a>
        <a href="#">編集(<u>E</u>)</a>
        <a href="#">ビュー(<u>V</u>)</a>
        <a href="#">レイヤ(<u>L</u>)</a>
        <a href="#">設定(<u>S</u>)</a>
        <a href="#">プラグイン(<u>P</u>)</a>
        <a href="#">ベクタ(<u>O</u>)</a>
        <a href="#">ラスタ(<u>R</u>)</a>
        <a href="#">データベース(<u>D</u>)</a>
        <a href="#">Web(<u>W</u>)</a>
        <a href="#">プロセッシング(<u>C</u>)</a>
        <a href="#">ヘルプ(<u>H</u>)</a>
    </nav>

    <!-- Main toolbar -->
    <div class="h-[19px] shrink-0 flex items-center border-y border-b-[#d5d5d5] border-t-[#e2e2e2] bg-linear-to-b from-[#fafafa] to-[#efefef] [&_svg]:size-3 [&_svg]:block">
        <div class="w-[111px] ml-2 flex justify-between">
            <button aria-label="新規"><svg><use href="#new"/></svg></button>
            <button aria-label="開く"><svg><use href="#open"/></svg></button>
            <button aria-label="保存"><svg><use href="#save"/></svg></button>
            <button aria-label="名前を付けて保存"><svg><use href="#saveas"/></svg></button>
            <button aria-label="新規レイアウト"><svg><use href="#newlayout"/></svg></button>
            <button aria-label="レイアウトマネージャ"><svg><use href="#layoutmgr"/></svg></button>
            <button aria-label="スタイルマネージャ"><svg><use href="#style"/></svg></button>
        </div>
        <button aria-label="地図を移動" class="ml-[11px] w-4 h-4 flex items-center justify-center rounded-sm border border-[#b5b5b5] bg-[#dcdcdc]"><svg><use href="#hand"/></svg></button>
        <div class="w-[211px] ml-0.5 flex justify-between">
            <button aria-label="選択に移動"><svg><use href="#pan"/></svg></button>
            <button aria-label="拡大"><svg><use href="#zoomin"/></svg></button>
            <button aria-label="縮小"><svg><use href="#zoomout"/></svg></button>
            <button aria-label="等倍"><svg><use href="#zoomone"/></svg></button>
            <button aria-label="全域表示"><svg><use href="#zoomfull"/></svg></button>
            <button aria-label="選択にズーム"><svg><use href="#zoomsel"/></svg></button>
            <button aria-label="レイヤにズーム"><svg><use href="#zoomlayer"/></svg></button>
            <button aria-label="前の表示"><svg><use href="#zoomlast"/></svg></button>
            <button aria-label="次の表示"><svg><use href="#zoomnext"/></svg></button>
            <button aria-label="新規マップビュー"><svg><use href="#mapnew"/></svg></button>
            <button aria-label="新規ブックマーク"><svg><use href="#bookmarknew"/></svg></button>
            <button aria-label="ブックマーク"><svg><use href="#bookmark"/></svg></button>
            <button aria-label="再読み込み"><svg><use href="#refresh"/></svg></button>
        </div>
        <span class="ml-1.5 mr-[5px] h-3 border-l border-[#ddd]"></span>
        <button aria-label="地物情報"><svg><use href="#identify"/></svg></button>
        <button aria-label="アクション" class="ml-1 flex items-center gap-[3px] text-[#d6d6d4]"><svg><use href="#gear"/></svg><svg class="size-1! text-[#777]"><use href="#caret"/></svg></button>
        <button aria-label="選択" class="ml-1 flex items-center gap-[3px]"><svg><use href="#select"/></svg><svg class="size-1! text-[#777]"><use href="#caret"/></svg></button>
        <button aria-label="値で選択" class="ml-1 flex items-center gap-[3px]"><svg><use href="#layersgray"/></svg><svg class="size-1! text-[#777]"><use href="#caret"/></svg></button>
        <div class="w-[94px] ml-1 flex justify-between">
            <button aria-label="選択解除"><svg><use href="#deselect"/></svg></button>
            <button aria-label="属性テーブル"><svg><use href="#table"/></svg></button>
            <button aria-label="フィールド計算機"><svg><use href="#calc"/></svg></button>
            <button aria-label="ツールボックス" class="text-[#6193c4]"><svg><use href="#gear"/></svg></button>
            <button aria-label="統計"><svg><use href="#sigma"/></svg></button>
            <button aria-label="計測"><svg><use href="#measure"/></svg></button>
        </div>
        <svg class="size-1! ml-0.5 text-[#555]"><use href="#caret"/></svg>
        <button aria-label="マップチップ" class="ml-1"><svg><use href="#tip"/></svg></button>
        <button aria-label="注記" class="ml-1 flex items-center gap-[3px]"><svg><use href="#annot"/></svg><svg class="size-1! text-[#555]"><use href="#caret"/></svg></button>
    </div>

    <!-- Second toolbar -->
    <div class="h-[19px] shrink-0 flex items-center border-b border-[#c9c9c9] bg-linear-to-b from-[#fafafa] to-[#efefef] [&_svg]:size-3 [&_svg]:block">
        <div class="w-[79px] ml-2 flex justify-between">
            <button aria-label="データソース"><svg><use href="#dsm"/></svg></button>
            <button aria-label="新規 GeoPackage"><svg><use href="#gpkgnew"/></svg></button>
            <button aria-label="新規シェープファイル"><svg><use href="#veenew"/></svg></button>
            <button aria-label="新規 SpatiaLite"><svg><use href="#feathernew"/></svg></button>
            <button aria-label="新規スクラッチ"><svg><use href="#chipnew"/></svg></button>
        </div>
        <span class="ml-2 mr-[3px] h-3 border-l border-[#ddd]"></span>
        <div class="w-[129px] flex justify-between">
            <button aria-label="ラベル"><svg><use href="#labelgray"/></svg></button>
            <button aria-label="ダイアグラム"><svg><use href="#pie"/></svg></button>
            <button aria-label="ラベル固定の表示"><svg><use href="#pin"/></svg></button>
            <button aria-label="ラベル固定"><svg><use href="#labelgray2"/></svg></button>
            <button aria-label="ラベル表示"><svg><use href="#labeleye"/></svg></button>
            <button aria-label="ラベル移動"><svg><use href="#labelgray2"/></svg></button>
            <button aria-label="ラベル回転"><svg><use href="#labelgray2"/></svg></button>
            <button aria-label="ラベル変更"><svg><use href="#labelgray2"/></svg></button>
        </div>
        <span class="ml-1 mr-[7px] h-3 border-l border-[#ddd]"></span>
        <div class="w-[110px] flex items-center justify-between">
            <button aria-label="DB マネージャ"><svg><use href="#db"/></svg></button>
            <span class="h-3 border-l border-[#ddd]"></span>
            <button aria-label="MetaSearch"><svg><use href="#globefind"/></svg></button>
            <span class="h-3 border-l border-[#ddd]"></span>
            <button aria-label="Python"><svg><use href="#python"/></svg></button>
            <span class="h-3 border-l border-[#ddd]"></span>
            <button aria-label="ヘルプ"><svg><use href="#help"/></svg></button>
            <span class="h-3 border-l border-[#ddd]"></span>
            <button aria-label="トポロジ"><svg><use href="#topo"/></svg></button>
        </div>
        <span class="ml-[5px] mr-1.5 h-3 border-l border-[#ddd]"></span>
        <div class="w-[129px] flex justify-between">
            <button aria-label="ローカル累積カット"><svg><use href="#hist"/></svg></button>
            <button aria-label="全体累積カット"><svg><use href="#histfull"/></svg></button>
            <button aria-label="ローカル引き伸ばし"><svg><use href="#histgreen"/></svg></button>
            <button aria-label="全体引き伸ばし"><svg><use href="#histfull"/></svg></button>
            <button aria-label="輝度を上げる"><svg><use href="#sunup"/></svg></button>
            <button aria-label="輝度を下げる"><svg><use href="#sundown"/></svg></button>
            <button aria-label="コントラストを上げる"><svg><use href="#conup"/></svg></button>
            <button aria-label="コントラストを下げる"><svg><use href="#condown"/></svg></button>
        </div>
        <span class="ml-[5px] mr-1 h-3 border-l border-[#ddd]"></span>
        <button aria-label="スナップ"><svg><use href="#magnet"/></svg></button>
        <button aria-label="頂点" class="ml-[5px]"><svg><use href="#snapgray"/></svg></button>
        <button aria-label="交差" class="ml-1"><svg><use href="#dotsgray"/></svg></button>
        <label class="ml-0.5 flex h-[11px] w-[41px] items-center rounded-xs border border-[#c2c2c2] bg-[#f3f3f3] text-[#888]">
            <input type="text" value="12" aria-label="許容範囲" class="min-w-0 flex-1 pl-0.5 bg-transparent">
            <span class="border-l border-[#ccc] pl-px pr-px text-[#888]"><svg class="size-1!"><use href="#caretup"/></svg><svg class="size-1!"><use href="#caret"/></svg></span>
        </label>
        <div class="relative w-8 text-[#888]">
            <select aria-label="単位" class="block w-full h-[11px] pl-1 appearance-none rounded-xs border border-[#cfcfcf] bg-[#f7f7f7]"><option>px</option></select>
            <svg class="absolute right-1 top-[3px] size-1! pointer-events-none"><use href="#caret"/></svg>
        </div>
        <button class="ml-auto pr-0.5 text-[8px] font-bold text-[#333]">»</button>
    </div>

    <main class="flex-1 min-h-0 flex">
        <!-- Layer toolbar on the left edge -->
        <div class="w-[26px] shrink-0 flex flex-col gap-1 pl-1 pt-2 [&_svg]:size-3 [&_svg]:block [&_button]:flex [&_button]:items-center [&_button]:gap-[3px] text-[#555]">
            <button aria-label="ベクタ追加"><svg><use href="#veeadd"/></svg></button>
            <button aria-label="ラスタ追加"><svg><use href="#rasteradd"/></svg></button>
            <button aria-label="CSV 追加"><svg><use href="#comma"/></svg></button>
            <button aria-label="SpatiaLite 追加"><svg><use href="#featheradd"/></svg></button>
            <button aria-label="仮想レイヤ追加"><svg><use href="#mesh"/></svg></button>
            <button aria-label="PostGIS 追加"><svg><use href="#pgadd"/></svg><svg class="size-1!"><use href="#caret"/></svg></button>
            <button aria-label="WMS 追加"><svg><use href="#globeadd"/></svg><svg class="size-1!"><use href="#caret"/></svg></button>
            <button aria-label="WCS 追加"><svg><use href="#wcsadd"/></svg></button>
            <button aria-label="WFS 追加"><svg><use href="#wfsadd"/></svg><svg class="size-1!"><use href="#caret"/></svg></button>
            <button aria-label="GeoPackage 追加"><svg><use href="#gpkg"/></svg><svg class="size-1!"><use href="#caret"/></svg></button>
        </div>

        <div class="w-[134px] shrink-0 flex flex-col">
            <!-- Browser panel -->
            <section class="flex flex-col border-l border-t border-[#ccc]">
                <div class="h-[10px] flex items-center gap-px pl-0.5 pr-px">
                    <h2 class="flex-1">ブラウザ</h2>
                    <button aria-label="切り離す"><svg class="block size-1.5"><use href="#float"/></svg></button>
                    <button aria-label="閉じる"><svg class="block size-1.5"><use href="#close"/></svg></button>
                </div>
                <div class="h-[15px] flex items-center gap-[5px] pl-[3px] [&_svg]:size-2 [&_svg]:block">
                    <button aria-label="レイヤ追加"><svg><use href="#addlayer"/></svg></button>
                    <button aria-label="更新"><svg><use href="#refresh"/></svg></button>
                    <button aria-label="フィルタ"><svg><use href="#filter"/></svg></button>
                    <button aria-label="折りたたむ"><svg><use href="#collapse"/></svg></button>
                    <button aria-label="プロパティ"><svg><use href="#info"/></svg></button>
                </div>
                <ul class="h-[204px] bg-white border border-l-0 border-[#bbb] [&>li]:h-[9px] [&>li]:flex [&>li]:items-center [&>li]:pl-[11px] [&>li]:gap-[3px] [&_svg]:size-2 [&_i]:-ml-2 [&_i]:w-[5px] [&_i]:text-[#555] [&_i_svg]:size-1">
                    <li><svg><use href="#star"/></svg>お気に入り</li>
                    <li><i><svg><use href="#caretright"/></svg></i><svg><use href="#projhome"/></svg>プロジェクトホーム</li>
                    <li><i><svg><use href="#caretright"/></svg></i><svg><use href="#home"/></svg>ホーム</li>
                    <li><i><svg><use href="#caretright"/></svg></i><svg><use href="#folder"/></svg>C:¥</li>
                    <li><i><svg><use href="#caretright"/></svg></i><svg><use href="#folder"/></svg>D:¥</li>
                    <li><i><svg><use href="#caretright"/></svg></i><svg><use href="#folder"/></svg>E:¥</li>
                    <li><i><svg><use href="#caretright"/></svg></i><svg><use href="#folder"/></svg>R:¥</li>
                    <li><i><svg><use href="#caretright"/></svg></i><svg><use href="#gpkg"/></svg>GeoPackage</li>
                    <li><svg><use href="#feather"/></svg>SpatiaLite</li>
                    <li><svg><use href="#elephant"/></svg>PostGIS</li>
                    <li><svg><use href="#mssql"/></svg>MSSQL</li>
                    <li><svg><use href="#oracle"/></svg>Oracle</li>
                    <li><svg><use href="#db2"/></svg>DB2</li>
                    <li><svg><use href="#globe"/></svg>WMS/WMTS</li>
                    <li><i><svg><use href="#caretright"/></svg></i><svg><use href="#globe"/></svg>XYZ Tiles</li>
                    <li><svg><use href="#wcs"/></svg>WCS</li>
                    <li><svg><use href="#wfs"/></svg>WFS</li>
                    <li><svg><use href="#ows"/></svg>OWS</li>
                    <li><svg><use href="#arcmap"/></svg>ArcGisMapServer</li>
                    <li><svg><use href="#arcfeat"/></svg>ArcGisFeatureServer</li>
                    <li><svg><use href="#geonode"/></svg>GeoNode</li>
                </ul>
            </section>

            <!-- Layers panel -->
            <section class="flex-1 min-h-0 mt-[3px] flex flex-col border-l border-[#ccc]">
                <div class="h-[10px] flex items-center gap-px pl-0.5 pr-px">
                    <h2 class="flex-1">レイヤー</h2>
                    <button aria-label="切り離す"><svg class="block size-1.5"><use href="#float"/></svg></button>
                    <button aria-label="閉じる"><svg class="block size-1.5"><use href="#close"/></svg></button>
                </div>
                <div class="h-[15px] flex items-center gap-[5px] pl-px [&_svg]:size-2 [&_svg]:block">
                    <button aria-label="スタイル" class="h-3 w-3 flex items-center justify-center rounded-xs border border-[#b5b5b5] bg-[#dcdcdc] -mr-px"><svg><use href="#brush"/></svg></button>
                    <button aria-label="グループ"><svg><use href="#group"/></svg></button>
                    <button aria-label="表示"><svg><use href="#eye"/></svg></button>
                    <button aria-label="フィルタ"><svg><use href="#filter"/></svg></button>
                    <button aria-label="式フィルタ" class="flex items-center gap-[3px] text-[#999]"><svg><use href="#epsilon"/></svg><svg class="size-1!"><use href="#caret"/></svg></button>
                    <button aria-label="展開"><svg><use href="#expand"/></svg></button>
                    <button aria-label="折りたたむ"><svg><use href="#collapse"/></svg></button>
                    <button aria-label="削除"><svg><use href="#remove"/></svg></button>
                </div>
                <ul class="flex-1 bg-white border border-l-0 border-[#bbb] [&>li]:h-[9px] [&>li]:flex [&>li]:items-center [&>li]:pl-[3px] [&_i]:w-2 [&_i_svg]:size-1 [&_i]:text-[#555] [&_label]:flex [&_label]:items-center [&_label>svg]:size-2 [&_label>svg]:ml-1 [&_label>svg]:mr-0.5 [&_input]:appearance-none [&_input]:size-[7px] [&_input]:border [&_input]:border-[#ccc] [&_input]:bg-white">
                    <li><i><svg><use href="#caretright"/></svg></i><label><span class="relative flex"><input type="checkbox" checked><svg class="absolute inset-0 size-[7px] pointer-events-none" viewBox="0 0 7 7"><path d="m1.500 3.500 1.500 2 2.500-4" fill="none" stroke="#111" stroke-width="1.200"/></svg></span><svg><use href="#rasterlay"/></svg><span class="font-semibold underline text-black">landcover</span></label></li>
                    <li><i></i><label class="italic text-[#a3a3a3]"><input type="checkbox"><svg><use href="#rasterlay"/></svg>RGB_LandsatARD</label></li>
                    <li><i><svg><use href="#caretright"/></svg></i><label class="italic text-[#a3a3a3]"><input type="checkbox"><svg><use href="#rasterlay"/></svg>SR_50M_alaska_nad</label></li>
                </ul>
            </section>
        </div>

        <!-- Map canvas -->
        <section class="flex-1 min-w-0 ml-[3px] mr-px border border-[#c4c4c4] border-t-0 bg-white flex flex-col">
            <svg class="mt-[138px] mx-[5px] h-[142px] block" viewBox="12 25 793 426" preserveAspectRatio="none" color-interpolation-filters="sRGB">
                <defs>
                    <clipPath id="land">
                        <path d="M375 84 392 78 405 68 425 52 448 42 462 30 478 40 500 46 525 50 545 55 565 52 592 54 597 62 635 272 655 275 672 290 692 298 705 277 720 287 742 310 765 330 790 338 803 346 803 368 785 366 770 376 750 366 735 350 715 332 700 312 680 302 660 292 640 287 615 287 595 283 575 287 560 294 545 292 535 306 515 317 512 300 522 282 505 295 490 310 485 325 495 335 475 347 460 355 440 372 425 384 400 397 370 410 345 422 330 420 350 408 375 398 400 382 420 370 438 355 442 340 425 325 410 329 388 324 398 305 385 293 365 291 352 278 356 262 348 245 350 230 365 215 385 216 400 210 412 205 418 190 405 182 385 183 365 178 358 165 346 150 360 140 382 135 400 145 415 150 427 143 410 135 395 125 388 110 378 100z"/>
                        <path d="m294 186 12 4 16 12-3 5-12-8-12-5zM326 280l12-2 7 7-8 6-10-4zM475 365l12-14 12-14 8 4-5 16-14 16-10 4zM326 416l12-3-2 8-9 2zM300 432l14-5-2 7-10 4zM270 441l20-6 8 2-14 7zM236 446l14-1 4 4-16 1zM175 441l16-2 4 5-14 2zM146 435l14 2 3 5-12-2zM128 430l9 4-4 3zM116 428l4 2-3 3zM260 253l5 2-3 5z"/>
                    </clipPath>
                    <filter id="rough" x="0" y="0" width="100%" height="100%">
                        <feTurbulence type="fractalNoise" baseFrequency=".16" numOctaves="3" seed="4"/>
                        <feDisplacementMap in="SourceGraphic" scale="20" xChannelSelector="R" yChannelSelector="G"/>
                    </filter>
                    <filter id="grain-green" x="0" y="0" width="100%" height="100%">
                        <feTurbulence type="fractalNoise" baseFrequency=".13" numOctaves="3" seed="9"/>
                        <feColorMatrix values="0 0 0 0 .42  0 0 0 0 .64  0 0 0 0 .10  14 0 0 0 -7.200"/>
                        <feComposite in2="SourceGraphic" operator="in"/>
                    </filter>
                    <filter id="grain-orange" x="0" y="0" width="100%" height="100%">
                        <feTurbulence type="fractalNoise" baseFrequency=".14" numOctaves="3" seed="21"/>
                        <feColorMatrix values="0 0 0 0 .95  0 0 0 0 .66  0 0 0 0 .05  14 0 0 0 -7.900"/>
                        <feComposite in2="SourceGraphic" operator="in"/>
                    </filter>
                    <filter id="grain-cream" x="0" y="0" width="100%" height="100%">
                        <feTurbulence type="fractalNoise" baseFrequency=".13" numOctaves="3" seed="33"/>
                        <feColorMatrix values="0 0 0 0 .98  0 0 0 0 .92  0 0 0 0 .68  14 0 0 0 -8.800"/>
                        <feComposite in2="SourceGraphic" operator="in"/>
                    </filter>
                    <filter id="grain-brown" x="0" y="0" width="100%" height="100%">
                        <feTurbulence type="fractalNoise" baseFrequency=".1" numOctaves="3" seed="47"/>
                        <feColorMatrix values="0 0 0 0 .56  0 0 0 0 .30  0 0 0 0 .04  14 0 0 0 -7.500"/>
                        <feComposite in2="SourceGraphic" operator="in"/>
                    </filter>
                </defs>
                <path d="M12 25h793v426H12z" fill="#4a9fd8"/>
                <g filter="url(#rough)">
                    <!-- keeps the filter region equal to the whole map -->
                    <path d="M12 25h793v426H12z" fill="#4a9fd8"/>
                    <g clip-path="url(#land)">
                        <path d="M12 25h793v426H12z" fill="#f2ae1c"/>
                        <path d="M360 25h245l3 60-60 20-60 5-40-20-30 20-50 0z" fill="#faf5c4"/>
                        <path d="m440 72 60-8 70-4 25 2 5 20-50 18-50-4-60-10z" fill="#f2ae1c"/>
                        <path d="m540 80 50-20 8 10-45 20zM450 92l70 12 70-12-60 22-70-5z" fill="#f9d9b8"/>
                        <path d="m425 150 50-22 60-12 60-25 10-2 28 180-47-55-70-5-45 30-40 10-30-55z" fill="#b5b22a"/>
                        <path d="m410 200 50 0 30 30-10 50-60 10-30-40z" fill="#cfa226"/>
                        <path d="M345 205h75l15 35 25 55 20 30-60 100-110 5z" fill="#c47a18"/>
                        <path d="m345 240 30 0 8 20 25 10-10 15-50 5z" fill="#e2a12b"/>
                        <path d="m365 225 35 0 5 20-30 8zM425 310l40-5 5 25-70 75-20-5 60-60z" fill="#8a4c0c"/>
                        <path d="m400 290 15-20 25 15-15 25-22 0z" fill="#f7ecc0"/>
                        <path d="m450 180 30-8 30-6 0 16-25 8-30 12zM515 145l45 2 15 10-40 12zM475 195l30-15 5 10-30 18z" fill="#128014"/>
                        <path d="m560 160 50 10-5 25-45-15z" fill="#f7e6b0"/>
                        <path d="m438 155 12 0 3 30-10-8z" fill="#1fd020"/>
                        <path d="M478 320c-4-60 10-115 75-121 45 0 70 40 84 46v45l-75 8-55 40-30 5z" fill="#fbd0bf"/>
                        <path d="m500 262 15-24 30-16 30 10-22 18-40 10-8 24z" fill="#ecca80"/>
                        <path d="m520 235 12 0 3 25-12 25-6-20z" fill="#2ba822"/>
                        <path d="m515 262 14-2-6 30-15 20z" fill="#b8a53a"/>
                        <path d="m560 215 40 5 20 10-10 8z" fill="#b7a83c"/>
                        <path d="m640 270 60 30 10-25 100 60v10l-60-10-100-40z" fill="#fbccc0"/>
                        <path d="m704 294 10-2 36 40 60 20v25l-35 8-60-50z" fill="#318a35"/>
                        <path d="m702 300 8-4 24 44-8 6z" fill="#dcb27c"/>
                        <path d="m455 330 35-20 10 15-30 20-15-5z" fill="#efbf86"/>
                        <path d="M470 330h40v50h-40z" fill="#9a8b35"/>
                        <path d="M100 405h250v45H100zM290 180h40v30h-40z" fill="#f6e6d0"/>
                    </g>
                </g>
                <g clip-path="url(#land)">
                    <path d="m415 150 180-45 30 130-40-20-50-20-50 30-70 20z" filter="url(#grain-green)"/>
                    <path d="m350 210 80-5 30 90-20 60-80 60-40 10z" filter="url(#grain-brown)"/>
                    <path d="m400 100 190-10 30 130-90-20-50 40-40 60-80-20z" filter="url(#grain-orange)"/>
                    <path d="m390 90 200 0 10 110-150 0-50 130-20 0z" filter="url(#grain-cream)"/>
                    <path d="m705 300 85 40v20h-30z" filter="url(#grain-orange)"/>
                </g>
            </svg>
        </section>

        <!-- Layer styling panel -->
        <section class="w-[199px] shrink-0 flex flex-col border-l border-[#ccc] pr-px [&_select]:block [&_select]:w-full [&_select]:h-[11px] [&_select]:appearance-none [&_select]:rounded-xs [&_select]:border [&_select]:border-[#bdbdbd] [&_select]:bg-linear-to-b [&_select]:from-white [&_select]:to-[#f1f1f1] [&_select]:text-[#222]">
            <div class="h-[11px] flex items-center gap-px pl-1 pr-px">
                <h2 class="flex-1">レイヤースタイル</h2>
                <button aria-label="切り離す"><svg class="block size-1.5"><use href="#float"/></svg></button>
                <button aria-label="閉じる"><svg class="block size-1.5"><use href="#close"/></svg></button>
            </div>
            <div class="relative ml-[3px] mr-px mt-px">
                <select aria-label="対象レイヤ" class="pl-3"><option>landcover</option></select>
                <svg class="absolute left-1 top-0.5 size-[7px] pointer-events-none"><use href="#rasterlay"/></svg>
                <svg class="absolute right-1 top-1 size-1 pointer-events-none"><use href="#caret"/></svg>
            </div>

            <div class="flex-1 min-h-0 flex mt-1 ml-[3px]">
                <!-- Dark tab strip -->
                <div class="w-[19px] flex flex-col bg-[#5f5f5f] [&_button]:h-4 [&_button]:flex [&_button]:items-center [&_button]:pl-[3px] [&_svg]:size-[11px]">
                    <button aria-label="シンボロジ" class="bg-[#f0f1f1]"><svg><use href="#palette"/></svg></button>
                    <button aria-label="透過性"><svg><use href="#transp"/></svg></button>
                    <button aria-label="ヒストグラム"><svg><use href="#histo"/></svg></button>
                    <button aria-label="レンダリング"><svg><use href="#render"/></svg></button>
                    <button aria-label="ピラミッド"><svg><use href="#pyramid"/></svg></button>
                </div>

                <div class="flex-1 min-w-0 flex flex-col">
                    <div class="flex-1 min-h-0 flex">
                        <div class="flex-1 min-w-0 overflow-hidden pl-1.5 pr-[5px] pt-1">
                            <div class="relative">
                                <select aria-label="レンダリングタイプ" class="pl-3"><option>パレット/ユニークな値</option></select>
                                <svg class="absolute left-[3px] top-0.5 size-2 pointer-events-none" viewBox="0 0 8 8"><path d="M.5.500h2v2h-2z" fill="#4a80b8"/><path d="M.5 3h2v2h-2z" fill="#d9534a"/><path d="M.5 5.500h2v2h-2z" fill="#4ba357"/><path d="M4 1.500h3M4 4h3M4 6.500h3" stroke="#777" stroke-width=".8"/></svg>
                                <svg class="absolute right-1 top-1 size-1 pointer-events-none"><use href="#caret"/></svg>
                            </div>
                            <div class="mt-[5px] flex items-center pr-0.5">
                                <label for="band" class="w-[31px] pl-px">バンド</label>
                                <div class="relative flex-1">
                                    <select id="band" class="pl-px"><option>バンド 1: Layer_1 (Palette)</option></select>
                                    <svg class="absolute right-1 top-1 size-1 pointer-events-none"><use href="#caret"/></svg>
                                </div>
                            </div>
                            <div class="mt-[3px] flex items-center pr-0.5">
                                <span class="w-[31px] pl-px text-[5px]">カラーランプ</span>
                                <button class="flex-1 h-[11px] rounded-xs border border-[#bdbdbd] bg-linear-to-b from-white to-[#f1f1f1] text-black">Random colors</button>
                                <button aria-label="カラーランプ一覧" class="w-1.5 h-[11px] flex items-center justify-center rounded-xs border border-[#bdbdbd] bg-white"><svg class="size-1"><use href="#caret"/></svg></button>
                            </div>

                            <!-- Palette classes -->
                            <div class="relative mt-[3px] mx-px h-[141px] flex border border-[#bbb] bg-white">
                                <div class="flex-1 overflow-hidden">
                                    <table class="w-full table-fixed text-left">
                                        <thead class="bg-[#f5f5f5]">
                                            <tr class="h-[10px] border-b border-[#ddd]">
                                                <th class="w-[50px] pl-0.5 py-0 font-normal border-r border-[#ddd]">値</th>
                                                <th class="w-[35px] pl-0.5 py-0 font-normal border-r border-[#ddd]">色</th>
                                                <th class="pl-0.5 py-0 font-normal">ラベル</th>
                                            </tr>
                                        </thead>
                                        <tbody class="[&_tr]:h-[22px] [&_td]:p-0 [&_span]:block [&_span]:mx-auto [&_span]:w-[21px] [&_span]:h-[21px] [&_span]:rounded-[4px] [&_td:first-child]:pl-3 [&_td:last-child]:pl-px">
                                            <tr><td>0</td><td><span class="bg-[#4a9fd8]"></span></td><td>Other</td></tr>
                                            <tr><td>1</td><td><span class="bg-[#006400]"></span></td><td>Class1</td></tr>
                                            <tr>
                                                <td class="bg-[#0078d7] text-white">2</td>
                                                <td class="bg-[#0078d7]"><span class="bg-[#007d00]"></span></td>
                                                <td><input type="text" value="2" aria-label="ラベル" class="block w-1 h-[7px] bg-[#0078d7] text-white leading-[7px]"></td>
                                            </tr>
                                            <tr><td>3</td><td><span class="bg-[#97c147]"></span></td><td>3</td></tr>
                                            <tr><td>4</td><td><span class="bg-[#00dc00]"></span></td><td>4</td></tr>
                                            <tr><td>5</td><td><span class="bg-[#00ff00]"></span></td><td>5</td></tr>
                                        </tbody>
                                    </table>
                                </div>
                                <div class="w-[7px] flex flex-col items-center justify-between bg-[#e6e6e6] border-l border-[#ccc] text-[#444]">
                                    <div class="w-full h-[53px] border-b border-[#ccc] bg-[#f8f8f8] flex justify-center pt-0.5"><svg class="size-1"><use href="#caretup"/></svg></div>
                                    <div class="w-full h-2 bg-[#f8f8f8] flex items-center justify-center"><svg class="size-1"><use href="#caret"/></svg></div>
                                </div>
                                <svg class="absolute left-[71px] top-[50px] w-[50px] h-[30px]" viewBox="0 0 50 30"><ellipse cx="25" cy="15" rx="23.500" ry="13.500" fill="none" stroke="#e8191c" stroke-width="1.300"/></svg>
                            </div>

                            <div class="mt-[3px] mx-px flex gap-[3px] [&_button]:h-3 [&_button]:rounded-xs [&_button]:border [&_button]:border-[#c2c2c2] [&_button]:bg-linear-to-b [&_button]:from-white [&_button]:to-[#f1f1f1] [&_button]:flex [&_button]:items-center [&_button]:justify-center text-black">
                                <button class="flex-1">分類</button>
                                <button aria-label="追加" class="w-3.5"><svg class="size-2" viewBox="0 0 8 8"><path d="M4 .5v7M.5 4h7" stroke="#5c9e62" stroke-width="2.800"/><path d="M4 1.500v5M1.500 4h5" stroke="#a3cba4" stroke-width=".9"/></svg></button>
                                <button aria-label="削除" class="w-3.5"><svg class="size-2" viewBox="0 0 8 8"><path d="M0 4h8" stroke="#e25f58" stroke-width="2.600"/><path d="M1 4h6" stroke="#f5b5b0" stroke-width=".8"/></svg></button>
                                <button class="flex-1">全削除</button>
                                <button class="w-3">…</button>
                            </div>

                            <h3 class="mt-1 h-[9px] pl-px font-bold text-black">レイヤレンダリング</h3>
                            <div class="border border-[#dcdcdc] pl-1 pr-[5px] pt-1 pb-1 flex flex-col gap-0.5 [&_label]:shrink-0 [&_input[type=range]]:appearance-none [&_input[type=range]]:min-w-0 [&_input[type=range]]:h-[3px] [&_input[type=range]]:rounded-xs [&_input[type=range]]:mr-[3px] [&_input::-webkit-slider-thumb]:appearance-none [&_input::-webkit-slider-thumb]:size-[7px] [&_input::-webkit-slider-thumb]:rounded-xs [&_input::-webkit-slider-thumb]:border [&_input::-webkit-slider-thumb]:border-[#b5b5b5] [&_input::-webkit-slider-thumb]:bg-white">
                                <div class="h-3 flex items-center">
                                    <label for="blend" class="w-[60px]">混合モード</label>
                                    <div class="relative flex-1">
                                        <select id="blend" class="pl-px"><option>通常</option></select>
                                        <svg class="absolute right-1 top-1 size-1 pointer-events-none"><use href="#caret"/></svg>
                                    </div>
                                </div>
                                <div class="h-3 flex items-center">
                                    <label for="brightness" class="w-[60px]">輝度</label>
                                    <input id="brightness" type="range" class="flex-1 bg-linear-to-r from-[#1f8ae0] from-50% to-[#d4d4d4] to-50%">
                                    <div class="w-[26px] shrink-0 h-2.5 flex rounded-xs border border-[#c2c2c2] bg-white"><input type="text" value="0" aria-label="輝度の値" class="min-w-0 flex-1 pl-0.5"><span class="border-l border-[#ccc] px-px"><svg class="size-1"><use href="#caretup"/></svg><svg class="size-1"><use href="#caret"/></svg></span></div>
                                </div>
                                <div class="h-3 flex items-center">
                                    <label for="saturation" class="w-[60px]">彩度</label>
                                    <input id="saturation" type="range" class="flex-1 bg-linear-to-r from-[#1f8ae0] from-50% to-[#d4d4d4] to-50%">
                                    <div class="w-[26px] shrink-0 h-2.5 flex rounded-xs border border-[#c2c2c2] bg-white"><input type="text" value="0" aria-label="彩度の値" class="min-w-0 flex-1 pl-0.5"><span class="border-l border-[#ccc] px-px"><svg class="size-1"><use href="#caretup"/></svg><svg class="size-1"><use href="#caret"/></svg></span></div>
                                </div>
                                <div class="h-3 flex items-center">
                                    <label for="contrast" class="w-[60px]">コントラスト</label>
                                    <input id="contrast" type="range" class="flex-1 bg-linear-to-r from-[#1f8ae0] from-50% to-[#d4d4d4] to-50%">
                                    <div class="w-[26px] shrink-0 h-2.5 flex rounded-xs border border-[#c2c2c2] bg-white"><input type="text" value="0" aria-label="コントラストの値" class="min-w-0 flex-1 pl-0.5"><span class="border-l border-[#ccc] px-px"><svg class="size-1"><use href="#caretup"/></svg><svg class="size-1"><use href="#caret"/></svg></span></div>
                                </div>
                                <div class="h-3 flex items-center">
                                    <label for="gray" class="w-[60px]">グレースケール</label>
                                    <div class="relative flex-1">
                                        <select id="gray" class="pl-px"><option>オフ</option></select>
                                        <svg class="absolute right-1 top-1 size-1 pointer-events-none"><use href="#caret"/></svg>
                                    </div>
                                </div>
                                <div class="flex items-center">
                                    <span class="w-[60px] shrink-0">色相</span>
                                    <div class="flex-1 min-w-0 flex flex-col gap-0.5">
                                        <div class="h-3 flex items-center">
                                            <label class="w-9 flex items-center gap-[3px]"><input type="checkbox" class="appearance-none size-[7px] border border-[#ccc] bg-white">着色</label>
                                            <button disabled aria-label="色" class="flex-1 h-[11px] rounded-xs border border-[#cfcfcf] p-px"><span class="block h-full bg-[#e6e3e3]"></span></button>
                                            <button disabled aria-label="色の一覧" class="w-1.5 h-[11px] flex items-center justify-center rounded-xs border border-[#d5d5d5] text-[#aaa]"><svg class="size-1"><use href="#caret"/></svg></button>
                                        </div>
                                        <div class="h-3 flex items-center">
                                            <label for="strength" class="w-[15px]">強調</label>
                                            <input id="strength" type="range" value="100" class="flex-1 bg-[#1f8ae0]">
                                            <div class="w-[26px] shrink-0 h-2.5 flex rounded-xs border border-[#cfcfcf] bg-[#f5f5f5] text-[#999]"><input type="text" value="100%" disabled aria-label="強調の値" class="min-w-0 flex-1 pl-px"><span class="border-l border-[#ddd] px-px"><svg class="size-1"><use href="#caretup"/></svg><svg class="size-1"><use href="#caret"/></svg></span></div>
                                        </div>
                                    </div>
                                </div>
                                <button class="self-end mr-[26px] h-3 w-[34px] flex items-center justify-center gap-0.5 rounded-xs border border-[#c2c2c2] bg-white text-black"><svg class="size-1.5"><use href="#undo"/></svg>リセット</button>
                            </div>

                            <h3 class="mt-1 h-[9px] font-bold text-black">リサンプリング</h3>
                            <div class="border border-[#dcdcdc] pl-1 pr-[5px] pt-1 flex flex-col gap-0.5 h-[60px]">
                                <div class="h-3 flex items-center">
                                    <label for="zin" class="w-[75px]">拡大</label>
                                    <div class="relative flex-1">
                                        <select id="zin" class="pl-px"><option>最近傍</option></select>
                                        <svg class="absolute right-1 top-1 size-1 pointer-events-none"><use href="#caret"/></svg>
                                    </div>
                                </div>
                                <div class="h-3 flex items-center">
                                    <label for="zout" class="w-[75px]">縮小</label>
                                    <div class="relative flex-1">
                                        <select id="zout" class="pl-px"><option>最近傍</option></select>
                                        <svg class="absolute right-1 top-1 size-1 pointer-events-none"><use href="#caret"/></svg>
                                    </div>
                                </div>
                            </div>
                        </div>
                        <!-- Panel scrollbar -->
                        <div class="w-[7px] flex flex-col justify-between bg-[#e6e6e6] border-l border-[#ccc] text-[#444]">
                            <div class="h-[342px] border-b border-[#ccc] bg-[#fafafa] flex justify-center pt-0.5"><svg class="size-1"><use href="#caretup"/></svg></div>
                            <div class="h-2 bg-[#fafafa] flex items-center justify-center"><svg class="size-1"><use href="#caret"/></svg></div>
                        </div>
                    </div>
                    <div class="h-[15px] shrink-0 flex items-center pl-0.5 gap-[3px] pt-px">
                        <button aria-label="元に戻す" class="size-3 flex items-center justify-center rounded-xs border border-[#c2c2c2] bg-white"><svg class="size-2"><use href="#undo"/></svg></button>
                        <button aria-label="やり直す" class="size-3 flex items-center justify-center rounded-xs border border-[#c2c2c2] bg-white"><svg class="size-2"><use href="#redo"/></svg></button>
                        <label class="ml-auto mr-0.5 flex items-center gap-0.5 text-black"><span class="relative flex"><input type="checkbox" checked class="appearance-none size-[7px] border border-[#ccc] bg-white"><svg class="absolute inset-0 size-[7px] pointer-events-none" viewBox="0 0 7 7"><path d="m1.500 3.500 1.500 2 2.500-4" fill="none" stroke="#111" stroke-width="1.200"/></svg></span>ライブ更新</label>
                        <button class="w-10 h-[11px] rounded-xs border border-[#c2c2c2] bg-linear-to-b from-white to-[#f1f1f1] text-black">適用</button>
                    </div>
                </div>
            </div>
        </section>
    </main>

    <!-- Status bar -->
    <footer class="h-[15px] shrink-0 flex items-center pl-0.5 pr-1 text-[#222] font-['Liberation_Sans','Noto_Sans_CJK_JP',sans-serif]">
        <label class="flex h-[11px] w-[99px] items-center gap-1 pl-1 rounded-xs border border-[#c2c2c2] bg-white">
            <svg class="size-1.5 shrink-0" viewBox="0 0 12 12"><circle cx="5" cy="5" r="4" fill="none" stroke="#888" stroke-width="1.500"/><path d="m8 8 3.500 3.500" stroke="#888" stroke-width="1.500"/></svg>
            <input type="search" placeholder="検索(Ctrl + K)" class="min-w-0 flex-1 placeholder:text-[#888]">
        </label>
        <label for="coord" class="ml-auto">座標</label>
        <input id="coord" type="text" value="4696435,-113580" class="ml-0.5 w-[54px] h-[11px] px-px rounded-xs border border-[#c2c2c2] bg-white">
        <svg class="ml-0.5 size-2" viewBox="0 0 12 12"><circle cx="5" cy="5" r="3.800" fill="#bbb" stroke="#555" stroke-width="1.400"/><path d="m2 2 8 9M9 1 6 6M8 8l3-2" stroke="#555" stroke-width="1.300"/></svg>
        <label for="scale" class="ml-1">縮尺</label>
        <div class="relative ml-0.5 w-[39px]">
            <select id="scale" class="block w-full h-[11px] pl-px appearance-none rounded-xs border border-[#c2c2c2] bg-white"><option>:26232687</option></select>
            <svg class="absolute right-[3px] top-1 size-1 pointer-events-none"><use href="#caret"/></svg>
        </div>
        <svg class="ml-1 size-2" viewBox="0 0 12 12"><path d="M3 6V3.500Q6-1 9 3.500V6" fill="none" stroke="#777" stroke-width="1.600"/><path d="M1.500 5.500h9v6h-9z" fill="#666"/></svg>
        <label for="mag" class="ml-0.5">拡大</label>
        <div class="ml-0.5 w-11 h-[11px] flex rounded-xs border border-[#c2c2c2] bg-white"><input id="mag" type="text" value="100%" class="min-w-0 flex-1 pl-px"><span class="border-l border-[#ccc] px-px flex flex-col justify-center"><svg class="size-1"><use href="#caretup"/></svg><svg class="size-1"><use href="#caret"/></svg></span></div>
        <label for="rot" class="ml-1">回転</label>
        <div class="ml-1 w-[41px] h-[11px] flex rounded-xs border border-[#c2c2c2] bg-white"><input id="rot" type="text" value="0.0°" class="min-w-0 flex-1 pl-px"><span class="border-l border-[#ccc] px-px flex flex-col justify-center"><svg class="size-1"><use href="#caretup"/></svg><svg class="size-1"><use href="#caret"/></svg></span></div>
        <label class="ml-[3px] flex items-center gap-0.5 text-black"><span class="relative flex"><input type="checkbox" checked class="appearance-none size-[7px] border border-[#ccc] bg-white"><svg class="absolute inset-0 size-[7px] pointer-events-none" viewBox="0 0 7 7"><path d="m1.500 3.500 1.500 2 2.500-4" fill="none" stroke="#111" stroke-width="1.200"/></svg></span>レンダ</label>
        <button class="ml-1 flex items-center gap-0.5"><svg class="size-[7px]" viewBox="0 0 12 12"><circle cx="6" cy="6" r="5" fill="#999"/><path d="M0 6h12M6 0v12" stroke="#666" stroke-width="1.300"/></svg>EPSG:2964</button>
        <button aria-label="メッセージ" class="ml-1"><svg class="block size-2" viewBox="0 0 12 12"><path d="M6 1q5.500 0 5.500 4.300T7 9.800L5.500 11.500 5 9.800Q.5 9 .500 5.300T6 1z" fill="#555"/><path d="M3 5.300h1.500M5.300 5.300h1.500M7.600 5.300h1.500" stroke="#fff" stroke-width="1.200"/></svg></button>
    </footer>
</body>
</html>
